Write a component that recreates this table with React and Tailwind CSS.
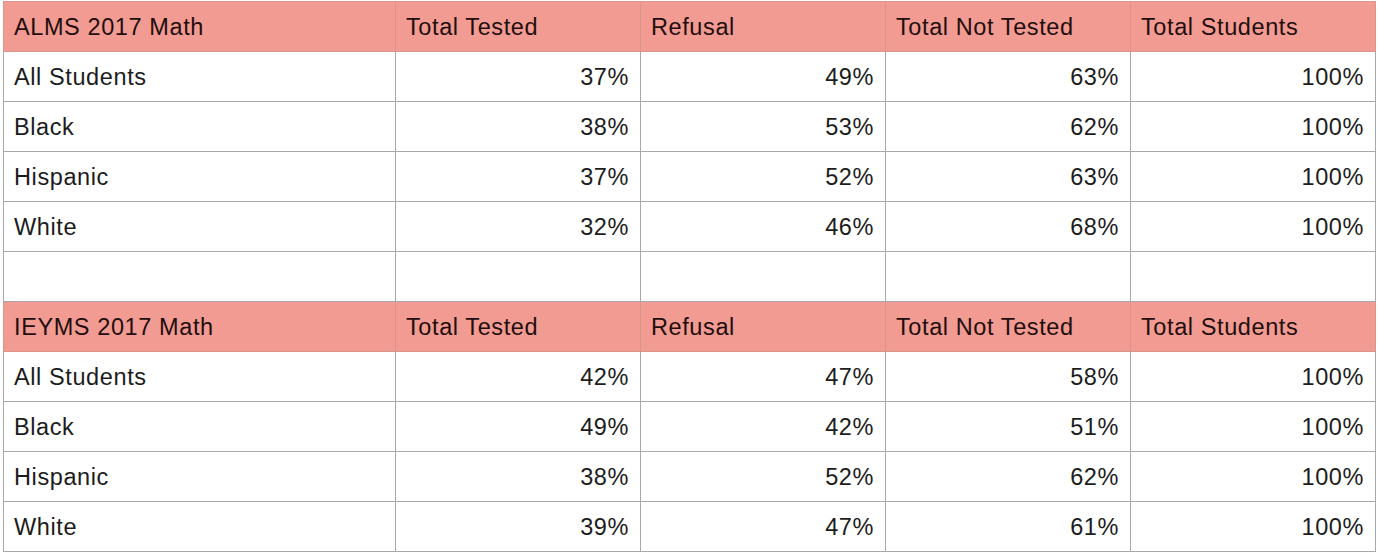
import React from 'react';

const sections = [
    {
        title: 'ALMS 2017 Math',
        rows: [
            ['All Students', '37%', '49%', '63%', '100%'],
            ['Black', '38%', '53%', '62%', '100%'],
            ['Hispanic', '37%', '52%', '63%', '100%'],
            ['White', '32%', '46%', '68%', '100%'],
        ],
    },
    {
        title: 'IEYMS 2017 Math',
        rows: [
            ['All Students', '42%', '47%', '58%', '100%'],
            ['Black', '49%', '42%', '51%', '100%'],
            ['Hispanic', '38%', '52%', '62%', '100%'],
            ['White', '39%', '47%', '61%', '100%'],
        ],
    },
];

const headers = ['Total Tested', 'Refusal', 'Total Not Tested', 'Total Students'];

const HeaderRow = ({ title }) => (
    <tr className="h-[50px] bg-[#f29b92] text-[#220e0e]">
        <td className="border border-[#d9948c] pl-[10px] pt-[3px] w-[392px]">{title}</td>
        {headers.map((h) => (
            <td key={h} className="border border-[#d9948c] pl-[10px] pt-[3px] w-[245px]">{h}</td>
        ))}
    </tr>
);

const App = () => {
    return (
        <div className="w-[1378px] h-[552px] overflow-hidden bg-white pl-[3px] pt-[1px]">
            <table
                className="border-collapse text-[23.5px] tracking-[0.6px] text-[#1c1c1c] table-fixed"
                style={{ fontFamily: '"Liberation Sans", Arial, sans-serif' }}
            >
                <tbody>
                    {sections.map((section, si) => (
                        <React.Fragment key={section.title}>
                            <HeaderRow title={section.title} />
                            {section.rows.map((row) => (
                                <tr key={row[0]} className="h-[50px]">
                                    <td className="border border-[#a8a8a8] pl-[10px] pt-[3px]">{row[0]}</td>
                                    {row.slice(1).map((v, i) => (
                                        <td key={i} className="border border-[#a8a8a8] pr-[11px] pt-[3px] text-right">{v}</td>
                                    ))}
                                </tr>
                            ))}
                            {si === 0 && (
                                <tr className="h-[50px]">
                                    {[0, 1, 2, 3, 4].map((i) => (
                                        <td key={i} className="border border-[#a8a8a8]"></td>
                                    ))}
                                </tr>
                            )}
                        </React.Fragment>
                    ))}
                </tbody>
            </table>
        </div>
    );
};

export default App;
